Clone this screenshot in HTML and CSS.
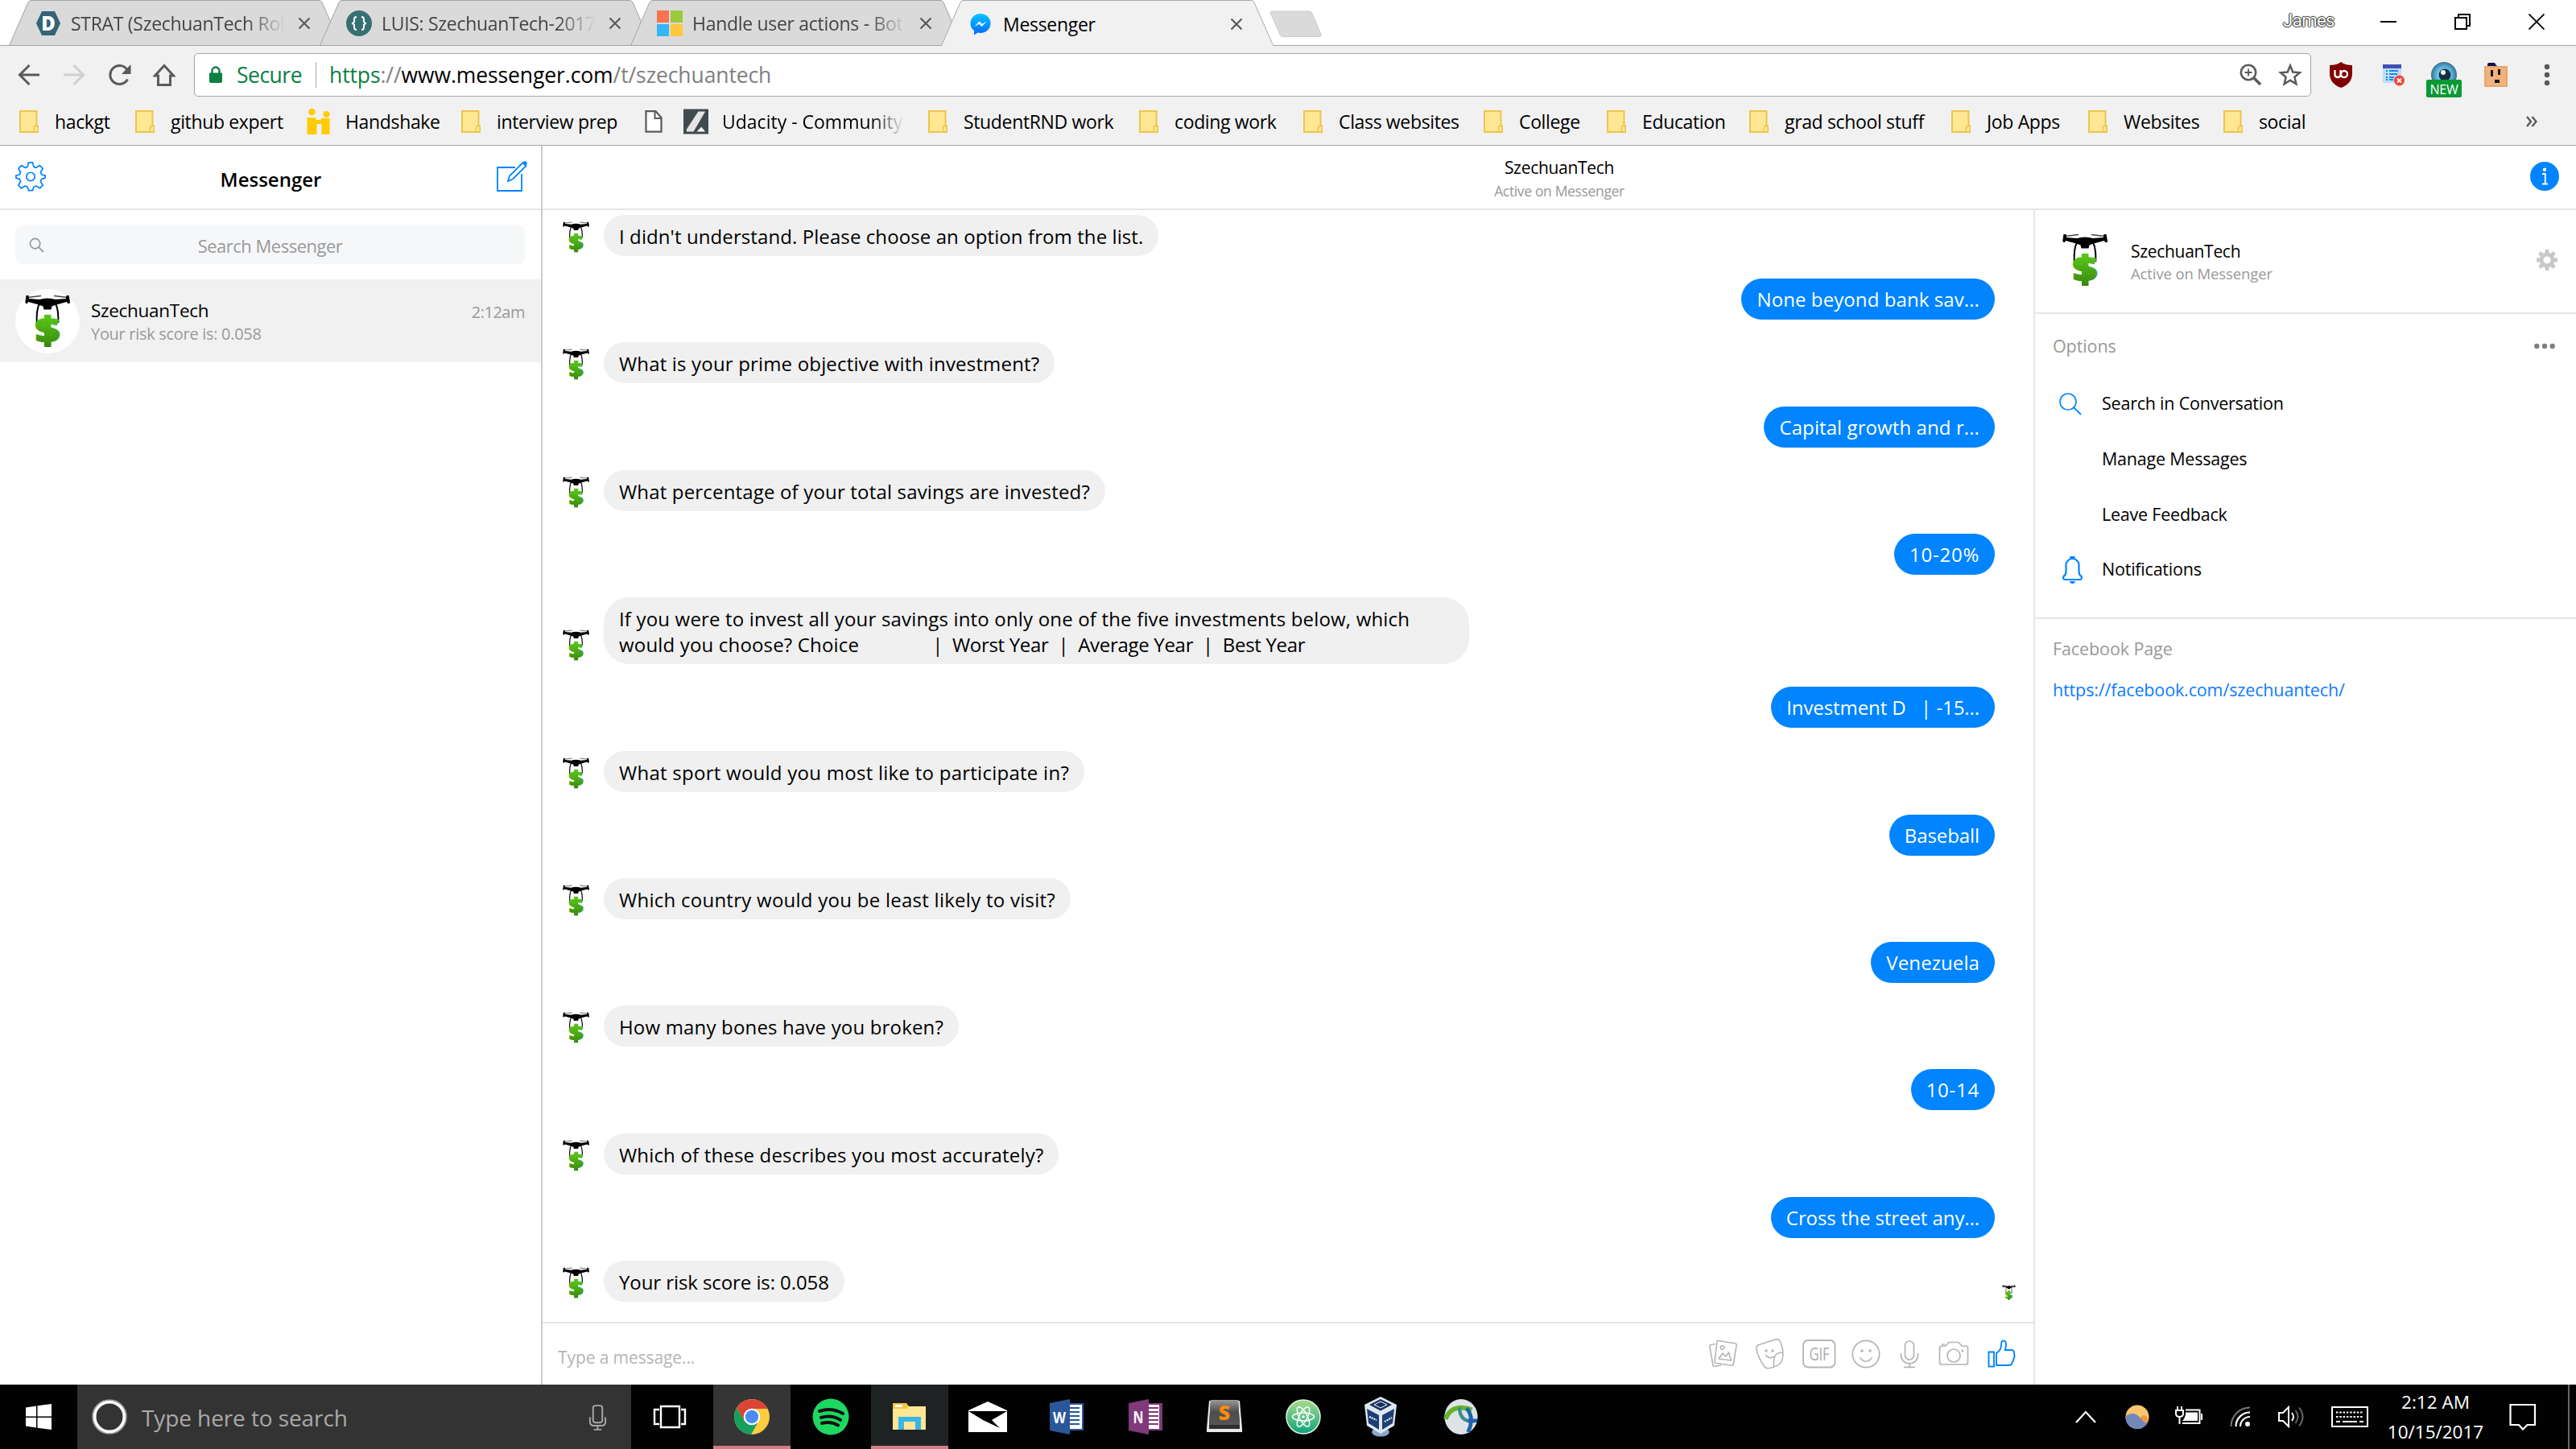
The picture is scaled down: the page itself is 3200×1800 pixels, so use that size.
FILE: index.html
```html
<!DOCTYPE html>
<html lang="en">
<head>
<meta charset="utf-8">
<title>Messenger</title>
<link rel="stylesheet" href="styles.css">
</head>
<body>
<svg class="defs" width="0" height="0" aria-hidden="true">
  <defs>
    <linearGradient id="green" x1="0" y1="0" x2="0" y2="1"><stop offset="0.25" stop-color="#58c41a"/><stop offset="1" stop-color="#347f0c"/></linearGradient>
    <linearGradient id="bolt" x1="0" y1="0" x2="0" y2="1"><stop offset="0" stop-color="#00c6ff"/><stop offset="1" stop-color="#0068ff"/></linearGradient>
    <linearGradient id="atom" x1="0" y1="0" x2="0" y2="1"><stop offset="0" stop-color="#a8dc8c"/><stop offset="1" stop-color="#0ea47c"/></linearGradient>
    <linearGradient id="key" x1="0" y1="0" x2="0" y2="1"><stop offset="0" stop-color="#9a9a9a"/><stop offset="0.5" stop-color="#4c4c4c"/><stop offset="1" stop-color="#555"/></linearGradient>
    <radialGradient id="eye"><stop offset="0" stop-color="#d8f4ff"/><stop offset="0.6" stop-color="#58b8e0"/><stop offset="1" stop-color="#3a6f8c"/></radialGradient>
  </defs>
  <symbol id="drone" viewBox="0 0 80 80">
    <circle cx="40" cy="40" r="40" fill="#fff"/>
    <path d="M15 10.500 32 8.500M65 10.500 48 8.500" stroke="#444" stroke-width="1.300"/>
    <path d="M13.500 8h3l.5 4 13 1q10-3 20 0l13-1 .5-4h3l1.500 8-.5 2h-2.500l-1-2-13 3.500-5.500 2-1 4h-9l-1-4-5.500-2-13-3.500-1 2H13l-.7-2z"/>
    <path d="M30 18q-4 8-3.300 24M50 18q4 8 3.300 24" fill="none" stroke="#000" stroke-width="2"/>
    <rect x="36" y="32" width="8.500" height="40" fill="url(#green)"/>
    <text x="40" y="66" text-anchor="middle" font-family="Open Sans" font-weight="800" font-size="42" textLength="31" lengthAdjust="spacingAndGlyphs" fill="url(#green)" stroke="url(#green)" stroke-width="1.500">$</text>
  </symbol>
  <symbol id="folder" viewBox="0 0 24 28"><path d="M1 1h20.500v18.500h2V27H1z" fill="#ffe793" stroke="#ecc54b" stroke-width="2"/><path d="M18.500 27v-6q0-1.500 1.700-1.500h1.300" fill="none" stroke="#ecc54b" stroke-width="1.500"/></symbol>
  <symbol id="tab" viewBox="0 0 413 57" preserveAspectRatio="none"><path d="M.5 56.500 24 3q1-2.500 4-2.500h357q3 0 4 2.500l23.500 53.500z" fill="#dadada" stroke="#a3a3a3"/></symbol>
  <symbol id="cross" viewBox="0 0 16 16"><path d="m1.500 1.500 13 13m0-13-13 13" stroke="#5a5a5a" stroke-width="2.200"/></symbol>
</svg>

<header class="browser">
  <div class="tabstrip">
    <div class="tab"><svg class="tab-shape"><use href="#tab"/></svg>
      <svg class="favicon" viewBox="0 0 32 32"><path d="M8 1h16l7 15-7 15H8L1 16z" fill="#356379"/><text x="16" y="25" text-anchor="middle" font-family="Open Sans" font-weight="800" font-size="24" fill="#fff">D</text></svg>
      <span class="tab-title faded">STRAT (SzechuanTech Rob</span><svg class="close"><use href="#cross"/></svg></div>
    <div class="tab"><svg class="tab-shape"><use href="#tab"/></svg>
      <svg class="favicon" viewBox="0 0 32 32"><circle cx="16" cy="16" r="16" fill="#377072"/><path d="M13 8q-3 0-3 3v3l-2 2 2 2v3q0 3 3 3M19 8q3 0 3 3v3l2 2-2 2v3q0 3-3 3" fill="none" stroke="#fff" stroke-width="2"/></svg>
      <span class="tab-title faded">LUIS: SzechuanTech-2017</span><svg class="close"><use href="#cross"/></svg></div>
    <div class="tab"><svg class="tab-shape"><use href="#tab"/></svg>
      <svg class="favicon" viewBox="0 0 32 32"><path d="M0 0h15v15H0z" fill="#f8734f"/><path d="M17 0h15v15H17z" fill="#9bcb3c"/><path d="M0 17h15v15H0z" fill="#35b5f3"/><path d="M17 17h15v15H17z" fill="#ffc83d"/></svg>
      <span class="tab-title faded">Handle user actions - Bot</span><svg class="close"><use href="#cross"/></svg></div>
    <div class="tab active"><svg class="tab-shape" viewBox="0 0 413 58" preserveAspectRatio="none"><path d="M0 58v-1.500q1 0 1.500-1.500L24 3q1-2.500 4-2.500h357q3 0 4 2.500l22 52q.500 1.500 2 1.500V58z" fill="#f1f1f1"/><path d="M.5 56.500 24 3q1-2.500 4-2.500h357q3 0 4 2.500l23.500 53.500" fill="none" stroke="#a9a9a9"/></svg>
      <svg class="favicon" viewBox="0 0 32 32"><path d="M16 3C9 3 3.500 8.300 3.500 15c0 4 1.700 7 4.500 9v5.500l4.500-3c1 .3 2.300.5 3.500.5 7 0 12.500-5.300 12.500-12S23 3 16 3z" fill="url(#bolt)"/><path d="m8.500 19 6-6.500 3.500 3.300 5.700-3.300-6 6.500-3.400-3.300z" fill="#fff"/></svg>
      <span class="tab-title">Messenger</span><svg class="close"><use href="#cross"/></svg></div>
    <svg class="newtab" viewBox="0 0 68 34"><path d="M4 1h46q3 0 4 2.500l11 26q1 3-2 3H18q-3 0-4-2.500L2.500 4Q1.500 1 4 1z" fill="#dadada" stroke="#ccc"/></svg>
    <div class="window">
      <span class="profile">James</span>
      <svg viewBox="0 0 20 20"><path d="M0 10h20" stroke="#000" stroke-width="2"/></svg>
      <svg viewBox="0 0 20 20"><path d="M1 5h14v14H1zM5 5V1h14v14h-4" fill="none" stroke="#000" stroke-width="2"/></svg>
      <svg viewBox="0 0 20 20"><path d="m.5.5 19 19m0-19-19 19" stroke="#000" stroke-width="1.800"/></svg>
    </div>
  </div>

  <div class="toolbar">
    <svg viewBox="0 0 28 28"><path d="M27 14H3M14.500 2 2.500 14l12 12" fill="none" stroke="#5a5a5a" stroke-width="3"/></svg>
    <svg viewBox="0 0 28 28"><path d="M1 14h24M13.500 2l12 12-12 12" fill="none" stroke="#d0d0d0" stroke-width="3"/></svg>
    <svg viewBox="0 0 28 28"><path d="M23.500 19.500A11.500 11.500 0 1 1 22.500 7" fill="none" stroke="#5a5a5a" stroke-width="3"/><path d="M27.500 1v12H16z" fill="#5a5a5a"/></svg>
    <svg viewBox="0 0 28 28"><path d="M6.500 15v11.500h15V15h4L14 2.500 2.500 15z" fill="none" stroke="#5a5a5a" stroke-width="3"/></svg>
    <div class="omnibox">
      <svg class="lock" viewBox="0 0 16 22"><path d="M0 8.500h16V19q0 2-2 2H2q-2 0-2-2z" fill="#0b8043"/><path d="M3.500 9V6a4.500 4.500 0 0 1 9 0v3" fill="none" stroke="#0b8043" stroke-width="2.400"/></svg>
      <span class="secure">Secure</span>
      <span class="url"><b>https</b>://<i>www.messenger.com</i>/t/szechuantech</span>
      <svg class="zoomicon" viewBox="0 0 28 28"><circle cx="11" cy="11" r="9.200" fill="none" stroke="#5a5a5a" stroke-width="2.600"/><path d="M11 6.500v9M6.500 11h9" stroke="#5a5a5a" stroke-width="1.800"/><path d="m17.500 17.500 8.500 8.500" stroke="#5a5a5a" stroke-width="3.600"/></svg>
      <svg class="star" viewBox="0 0 30 30"><path d="m15 3.500 3.300 8 8.700.7-6.600 5.600 2 8.500-7.400-4.600-7.400 4.600 2-8.500L3 12.200l8.700-.7z" fill="none" stroke="#5a5a5a" stroke-width="2.500"/></svg>
    </div>
    <svg class="ext" viewBox="0 0 32 32"><path d="M16 0q5 4 14 4v10q0 13-14 18Q2 27 2 14V4q9 0 14-4z" fill="#800000"/><path d="M8.500 10v5.500q0 3.500 3.500 3.500t3.500-3.500V10" fill="none" stroke="#fff" stroke-width="2.300"/><circle cx="20" cy="15" r="4" fill="none" stroke="#fff" stroke-width="2.300"/></svg>
    <svg class="ext" viewBox="0 0 32 32"><path d="M4 3h23v23H4z" fill="#bbdefb"/><path d="M4 3h23v5H4z" fill="#3f51b5"/><path d="M8 11h2m2 0h11M8 15h2m2 0h10M8 19h2m2 0h6M8 22h2m2 0h5" stroke="#1e88e5" stroke-width="2"/><circle cx="24.500" cy="23" r="6.500" fill="#f44336"/><path d="m22 20.500 5 5m0-5-5 5" stroke="#fff" stroke-width="2"/></svg>
    <div class="ext-badged"><svg class="ext" viewBox="0 0 32 32"><circle cx="16" cy="16" r="16" fill="url(#eye)"/><circle cx="17" cy="16" r="7.500" fill="#17303f"/><circle cx="15" cy="13" r="3" fill="#fff"/></svg><span class="badge">NEW</span></div>
    <svg class="ext" viewBox="0 0 32 32"><path d="M6 5V3q0-2 2-2h6q2 0 2 2l2 2z" fill="#10104f"/><path d="M2 5h29v26H2z" fill="#f0b27a"/><path d="M3 6h27v24H3z" fill="none" stroke="#dd9c60"/><path d="M10 10h3v8h-3zM19 9h3v7h-3zM15 22h6v4h-6z" fill="#111"/></svg>
    <svg class="ext" viewBox="0 0 32 32"><circle cx="16" cy="6" r="3.200" fill="#5a5a5a"/><circle cx="16" cy="16" r="3.200" fill="#5a5a5a"/><circle cx="16" cy="26" r="3.200" fill="#5a5a5a"/></svg>
  </div>

  <nav class="bookmarks">
    <span><svg class="folder"><use href="#folder"/></svg>hackgt</span>
    <span><svg class="folder"><use href="#folder"/></svg>github expert</span>
    <span><svg class="site" viewBox="0 0 30 32"><path d="M0 11h11v3h6v-2h11v20H18V19h-6v13H0z" fill="#ffcb05"/><circle cx="6" cy="4" r="4.300" fill="#ffcb05"/><circle cx="24" cy="7" r="4" fill="#ffcb05"/></svg>Handshake</span>
    <span><svg class="folder"><use href="#folder"/></svg>interview prep</span>
    <span><svg class="folder" viewBox="0 0 22 28"><path d="M1.500 1.200h12l7 8v17.500h-19z" fill="#fff" stroke="#5a5a5a" stroke-width="2.200"/><path d="M12.500 1.500v8.500h8" fill="none" stroke="#5a5a5a" stroke-width="2"/></svg></span>
    <span><svg class="site" viewBox="0 0 32 32"><path d="M0 0h32v32H0z" fill="#414b4f"/><path d="M19 3h9L13 29H4v-3z" fill="#e4e4e4"/><path d="m17 29 6-6 5 6z" fill="#fff"/></svg><em>Udacity - Community</em></span>
    <span><svg class="folder"><use href="#folder"/></svg>StudentRND work</span>
    <span><svg class="folder"><use href="#folder"/></svg>coding work</span>
    <span><svg class="folder"><use href="#folder"/></svg>Class websites</span>
    <span><svg class="folder"><use href="#folder"/></svg>College</span>
    <span><svg class="folder"><use href="#folder"/></svg>Education</span>
    <span><svg class="folder"><use href="#folder"/></svg>grad school stuff</span>
    <span><svg class="folder"><use href="#folder"/></svg>Job Apps</span>
    <span><svg class="folder"><use href="#folder"/></svg>Websites</span>
    <span><svg class="folder"><use href="#folder"/></svg>social</span>
    <svg class="more" viewBox="0 0 14 14"><path d="m1 1 5 6-5 6M7.500 1l5 6-5 6" fill="none" stroke="#5a5a5a" stroke-width="2.400"/></svg>
  </nav>
</header>

<main class="app">
  <aside class="sidebar">
    <div class="side-head">
      <svg class="gear" viewBox="0 0 40 40"><path d="M17.300 2h5.400l1.300 5.500 3.200 1.300 4.900-2.900 3.900 3.900-2.900 4.900 1.300 3.200 4.600 1v3.400l-4.600 1.300-1.300 3.200 2.900 5-3.900 3.800-4.900-2.900L24 34l-1.300 4.500h-5.400L16 34l-3.200-1.300-4.900 2.900L4 31.800l2.900-5-1.300-3.200L1 22.300v-3.400l4.600-1 1.300-3.200L4 9.800l3.900-3.900 4.900 2.900L16 7.500z" fill="none" stroke="#0084ff" stroke-width="1.800" stroke-linejoin="round"/><circle cx="20" cy="20.500" r="5.500" fill="none" stroke="#0084ff" stroke-width="1.800"/></svg>
      <h1>Messenger</h1>
      <svg class="compose" viewBox="0 0 40 40"><path d="M24 9H2v29h30V17" fill="none" stroke="#0084ff" stroke-width="1.800"/><path d="m15 26 2-6.500L33.500 3l4 4L21 23.500z" fill="none" stroke="#0084ff" stroke-width="1.800"/><path d="m33 3.500 2-2q1.500-1 3 .5t.5 3l-2 2z" fill="#0084ff"/></svg>
    </div>
    <div class="search"><svg viewBox="0 0 20 20"><circle cx="8" cy="8" r="6.500" fill="none" stroke="#999" stroke-width="1.800"/><path d="m12.500 12.500 6.500 6.500" stroke="#999" stroke-width="2"/></svg><span>Search Messenger</span></div>
    <div class="thread">
      <svg class="face"><use href="#drone"/></svg>
      <div class="thread-text"><p class="thread-name">SzechuanTech</p><p class="thread-last">Your risk score is: 0.058</p></div>
      <time>2:12am</time>
    </div>
  </aside>

  <section class="conversation">
    <div class="conv-head">
      <div class="conv-title"><p>SzechuanTech</p><small>Active on Messenger</small></div>
      <svg class="info" viewBox="0 0 36 36"><circle cx="18" cy="18" r="18" fill="#0084ff"/><circle cx="18" cy="9.800" r="2.200" fill="#fff"/><path d="M15 15h3.800V27M15 27.500h7" fill="none" stroke="#fff" stroke-width="1.800"/></svg>
    </div>
    <div class="conv-body">
      <div class="chat">
        <div class="log">
          <div class="msg in"><svg><use href="#drone"/></svg><p class="even">I didn't understand. Please choose an option from the list.</p></div>
          <div class="msg out"><p class="even">None beyond bank sav...</p></div>
          <div class="msg in"><svg><use href="#drone"/></svg><p>What is your prime objective with investment?</p></div>
          <div class="msg out"><p class="even">Capital growth and r...</p></div>
          <div class="msg in"><svg><use href="#drone"/></svg><p>What percentage of your total savings are invested?</p></div>
          <div class="msg out"><p class="digits">10-20%</p></div>
          <div class="msg in"><svg><use href="#drone"/></svg><p class="long">If you were to invest all your savings into only one of the five investments below, which<br>would you choose? Choice<span class="columns">|&nbsp; Worst Year&nbsp; |&nbsp; Average Year&nbsp; |&nbsp; Best Year</span></p></div>
          <div class="msg out"><p class="tight">Investment D &nbsp; | -15...</p></div>
          <div class="msg in"><svg><use href="#drone"/></svg><p class="loose">What sport would you most like to participate in?</p></div>
          <div class="msg out"><p class="tight">Baseball</p></div>
          <div class="msg in"><svg><use href="#drone"/></svg><p class="loose">Which country would you be least likely to visit?</p></div>
          <div class="msg out"><p class="even">Venezuela</p></div>
          <div class="msg in"><svg><use href="#drone"/></svg><p>How many bones have you broken?</p></div>
          <div class="msg out"><p class="digits">10-14</p></div>
          <div class="msg in"><svg><use href="#drone"/></svg><p>Which of these describes you most accurately?</p></div>
          <div class="msg out"><p class="tight">Cross the street any...</p></div>
          <div class="msg in"><svg><use href="#drone"/></svg><p class="tight">Your risk score is: 0.058</p><svg class="seen"><use href="#drone"/></svg></div>
        </div>
        <div class="composer">
          <span>Type a message...</span>
          <svg class="photos" viewBox="0 0 44 40"><g fill="none" stroke="#b5b5b5" stroke-width="1.600" stroke-linejoin="round"><path d="m18 3.500 21 3.500q1.500.3 1.200 2l-4 24q-.2 1.500-2 1.200l-20-3q-1.500-.3-1.200-2L16 5q.3-1.800 2-1.500zM14 7.500l-6 1q-1.500.3-1.200 2L11 34q.3 1.500 2 1.200l8-1.200"/><circle cx="22.500" cy="12" r="2.300"/><path d="m18 26 5-7 4 4 3.500-5 3 10z"/></g></svg>
          <svg class="sticker" viewBox="0 0 44 40"><g fill="none" stroke="#b5b5b5" stroke-width="1.600"><path d="M5 14q-1-4 3-5.500L28 2q5-1.500 7 3.500 4 9 2.500 19Q36 35 21 37.500q-5 1-7-3Q7 24 5 14zM38 18q-6 0-9 3t-2.500 15M16 21q5 6 11 2"/></g><circle cx="17" cy="16" r="1.700" fill="#b5b5b5"/><circle cx="25" cy="16" r="1.700" fill="#b5b5b5"/></svg>
          <svg class="gif" viewBox="0 0 44 40"><rect x="2" y="3" width="39.500" height="33.500" rx="6" fill="none" stroke="#b5b5b5" stroke-width="1.800"/><text x="22" y="27.500" text-anchor="middle" font-family="Open Sans" font-weight="400" font-size="22" textLength="25" lengthAdjust="spacingAndGlyphs" fill="#aaa">GIF</text></svg>
          <svg class="smile" viewBox="0 0 44 40"><g fill="none" stroke="#b5b5b5" stroke-width="1.700"><circle cx="22" cy="20" r="16.700"/><path d="M15 25q7 8.500 14 0" stroke-linecap="round"/></g><circle cx="17" cy="16" r="1.800" fill="#b5b5b5"/><circle cx="27" cy="16" r="1.800" fill="#b5b5b5"/></svg>
          <svg class="voice" viewBox="0 0 44 40"><g fill="none" stroke="#b5b5b5" stroke-width="1.700"><rect x="16.500" y="4" width="11" height="23" rx="5.500"/><path d="M11.500 19v2.500a10.500 10.500 0 0 0 21 0V19M22 32v4M15 36.300h14"/></g></svg>
          <svg class="camera" viewBox="0 0 44 40"><g fill="none" stroke="#b5b5b5" stroke-width="1.700"><path d="M6 10h6l4-4.500h12l4 4.500h5q2.500 0 2.500 2.500v18q0 2.500-2.500 2.500H7q-2.500 0-2.500-2.500v-18Q4.500 10 7 10M7 8h4"/><circle cx="22" cy="22" r="8"/></g><circle cx="33" cy="16" r="1.500" fill="#b5b5b5"/></svg>
          <svg class="like" viewBox="0 0 44 40"><path d="M6.500 17.500H13v18H6.500zM16 19q6-4 6-10 0-5.500 2.500-5.500 4 0 3.500 6l-1.300 5.500H35q4 .5 3 5 1 1.500.3 4-.3 1-1 1.700.3 3-1.700 4.300 0 4-4.600 4H16z" fill="none" stroke="#0084ff" stroke-width="1.900"/></svg>
        </div>
      </div>
      <aside class="details">
        <div class="who"><svg class="face"><use href="#drone"/></svg><div><p>SzechuanTech</p><small>Active on Messenger</small></div>
          <svg class="cog" viewBox="0 0 26 26"><circle cx="13" cy="13" r="7" fill="none" stroke="#c8c8c8" stroke-width="5"/><path d="M13 0v5m0 16v5M0 13h5m16 0h5M3.800 3.800 7 7m12 12 3.200 3.200m0-18.400L19 7M7 19l-3.200 3.200" stroke="#c8c8c8" stroke-width="4.800"/></svg></div>
        <div class="options">
          <h2>Options<svg viewBox="0 0 26 8"><circle cx="3.300" cy="4" r="3.200" fill="#7f7f7f"/><circle cx="13" cy="4" r="3.200" fill="#7f7f7f"/><circle cx="22.700" cy="4" r="3.200" fill="#7f7f7f"/></svg></h2>
          <p><svg viewBox="0 0 34 34"><circle cx="14" cy="14" r="10" fill="none" stroke="#0084ff" stroke-width="1.600"/><path d="m21 21 9 9" stroke="#0084ff" stroke-width="1.800"/></svg>Search in Conversation</p>
          <p>Manage Messages</p>
          <p>Leave Feedback</p>
          <p><svg viewBox="0 0 34 34"><path d="M19.500 3a8 8 0 0 1 8 9v7q0 4 3 6 1.500 3.500-2 4h-18q-3.500-.5-2-4 3-2 3-6v-7a8 8 0 0 1 8-9zM17.500 3V1h4v2" fill="none" stroke="#0084ff" stroke-width="2.200"/><path d="M16 31h7q-.5 3-3.500 3T16 31z" fill="#0084ff"/></svg>Notifications</p>
        </div>
        <div class="page"><h2>Facebook Page</h2><a>https://facebook.com/szechuantech/</a></div>
      </aside>
    </div>
  </section>
</main>

<footer class="taskbar">
  <div class="cell start"><svg viewBox="0 0 32 32"><path d="m0 4.500 13-2v13H0zM14.500 2.200 32 0v15.500H14.500zM0 17h13v12.500l-13-2zM14.500 17H32v15l-17.500-2.300z" fill="#fff"/></svg></div>
  <div class="find">
    <svg class="cortana" viewBox="0 0 44 44"><circle cx="22" cy="22" r="18.500" fill="none" stroke="#fff" stroke-width="4"/><circle cx="22" cy="22" r="21" fill="none" stroke="#999" stroke-width="1.600"/></svg>
    <span>Type here to search</span>
    <svg class="mic" viewBox="0 0 24 34"><g fill="none" stroke="#a9a9a9" stroke-width="2"><rect x="6" y="2" width="12" height="22" rx="3"/><path d="M2 17v6q0 5 5 5h10q5 0 5-5v-6M12 28v5M7 33h10"/></g></svg>
  </div>
  <div class="cell view"><svg viewBox="0 0 42 30"><path d="M10 2h23v26H10zM8 6H2v18h6M35 6h5v18h-5" fill="none" stroke="#fff" stroke-width="2.400"/></svg></div>
  <div class="cell open lit"><svg viewBox="0 0 44 44"><circle cx="22" cy="22" r="22" fill="#ffcd40"/><path d="M3 11A22 22 0 0 1 41.500 12H22L12 26z" fill="#db4437"/><path d="M3 11a22 22 0 0 0 18 33l9-16-12 3-6-5z" fill="#16a05d"/><circle cx="22" cy="22" r="10.300" fill="#fff"/><circle cx="22" cy="22" r="8.200" fill="#4c8bf5"/></svg></div>
  <div class="cell wide"><svg viewBox="0 0 46 46"><circle cx="23" cy="23" r="22.500" fill="#1ed760"/><path d="M9 16q15-5 29 3M11 24q13-4 24 3M12 31q11-3 20 2.500" fill="none" stroke="#111" stroke-width="4" stroke-linecap="round"/></svg></div>
  <div class="cell open"><svg viewBox="0 0 44 44"><path d="M1 6h16l4 3h21v29H1z" fill="#ffe694"/><path d="M1 5h17l3 4-3 3H1z" fill="#f5c445"/><path d="M4 7h9v3H4z" fill="#fff"/><path d="M8 38V22h28v16h-7V28H15v10z" fill="#3ab5e9"/></svg></div>
  <div class="cell mail"><svg viewBox="0 0 48 44"><path d="M0 14 24 3l24 11v27H0z" fill="#fff"/><path d="M0 15h48L29 26l10 10-21-10z" fill="#000"/></svg></div>
  <div class="cell"><svg viewBox="0 0 44 44"><path d="M24 6h18v32H24z" fill="#fff" stroke="#2b579a" stroke-width="2"/><path d="M25 11h13M25 16h13M25 21h13M25 26h13M25 31h13" stroke="#2b579a" stroke-width="2"/><path d="M1 5 26 0v44L1 39z" fill="#2b579a"/><text x="13" y="30" text-anchor="middle" font-family="Open Sans" font-weight="700" font-size="19" textLength="16" lengthAdjust="spacingAndGlyphs" fill="#fff">W</text></svg></div>
  <div class="cell"><svg viewBox="0 0 44 44"><path d="M24 6h18v32H24z" fill="#fff" stroke="#80397b" stroke-width="2"/><path d="M25 11h13M25 16h13M25 21h13M25 26h13M25 31h13M40 6v32" stroke="#80397b" stroke-width="2"/><path d="M1 5 26 0v44L1 39z" fill="#80397b"/><text x="13" y="30" text-anchor="middle" font-family="Open Sans" font-weight="700" font-size="21" textLength="13" lengthAdjust="spacingAndGlyphs" fill="#fff">N</text></svg></div>
  <div class="cell"><svg viewBox="0 0 44 44"><path d="M3 2h38l3 35v4H0v-4z" fill="#e8e8e8"/><path d="M5 1h34l2 30v6H3v-6z" fill="#2e2e2e"/><path d="M5 1h34l2 31H3z" fill="url(#key)"/><text x="22" y="26" text-anchor="middle" font-family="Open Sans" font-weight="800" font-size="25" fill="#ff8c0a">S</text></svg></div>
  <div class="cell"><svg viewBox="0 0 44 44"><circle cx="22" cy="22" r="21" fill="url(#atom)" stroke="#e3f3e3" stroke-width="1.500"/><g fill="none" stroke="#fff" stroke-width="1.500"><ellipse cx="22" cy="22" rx="13.500" ry="5"/><ellipse cx="22" cy="22" rx="13.500" ry="5" transform="rotate(62 22 22)"/><ellipse cx="22" cy="22" rx="13.500" ry="5" transform="rotate(118 22 22)"/></g><circle cx="22" cy="22" r="1.800" fill="#fff"/></svg></div>
  <div class="cell vbox"><svg viewBox="0 0 44 50"><ellipse cx="22" cy="44" rx="11" ry="5.500" fill="#8ea4cc"/><path d="m22 0 20 10-3 26-17 10-17-10L2 10z" fill="#dfe7f5"/><path d="m22 3 14 7-14 7.500L8 10z" fill="#17305c"/><path d="m22 6 8 4-8 4-8-4z" fill="none" stroke="#fff"/><path d="m5 15 15 8v18L7 33zM39 15l-15 8v18l13-8z" fill="#1d3f73"/><path d="m8 25 9 4M27 31l9-5" stroke="#fff" stroke-width="2" stroke-dasharray="2 1"/></svg></div>
  <div class="cell"><svg viewBox="0 0 44 46"><ellipse cx="22" cy="23" rx="21.500" ry="23" fill="#dfe3e6"/><path d="M2 26q4-13 18-15 9 0 16 3" fill="none" stroke="#65b32e" stroke-width="6"/><path d="M20 11q0 16 14 18" fill="none" stroke="#3b8f8f" stroke-width="4.500"/><path d="M29 12q11 12 2 31M31 28h12" fill="none" stroke="#1d63b0" stroke-width="5"/></svg></div>
  <div class="tray">
    <svg width="26" height="16" viewBox="0 0 26 16"><path d="M1 15 13 2l12 13" fill="none" stroke="#fff" stroke-width="2.200"/></svg>
    <svg width="30" height="30" viewBox="0 0 30 30"><circle cx="15" cy="15" r="14.500" fill="#fbc570"/><path d="M19 17q3-8 9 0l-1 6z" fill="#f0953a"/><path d="M.5 14q10-7 18 2 5 6 9 7A14.500 14.500 0 0 1 .5 14z" fill="#7488b8"/></svg>
    <svg width="34" height="26" viewBox="0 0 34 26"><path d="M3 0v5m5-5v5M1 5h9v4q0 4-4.500 4T1 9zM5.500 13v9" fill="none" stroke="#fff" stroke-width="2"/><path d="M13 4.500h17.500v16.500H9M33 9v8" fill="none" stroke="#fff" stroke-width="2"/><path d="M13 7.500h15v10.500H9q4-4 4-10.500z" fill="#fff"/></svg>
    <svg width="26" height="26" viewBox="0 0 26 26"><path d="M1.500 25A23.500 23.500 0 0 1 25 1.500" fill="none" stroke="#777" stroke-width="2"/><path d="M7.500 25A17.500 17.500 0 0 1 25 7.500M13 25a12 12 0 0 1 12-12" fill="none" stroke="#fff" stroke-width="2.200"/><circle cx="22" cy="22" r="3" fill="#fff"/></svg>
    <svg width="34" height="28" viewBox="0 0 34 28"><path d="M1 9h5l7-7v24l-7-7H1zM17 9q4 5 0 10" fill="none" stroke="#fff" stroke-width="2"/><path d="M21.500 6q6 8 0 16M26 2.500q9 11.500 0 23" fill="none" stroke="#666" stroke-width="2"/></svg>
    <svg width="46" height="26" viewBox="0 0 46 26"><path d="M1 1h44v24H1z" fill="none" stroke="#fff" stroke-width="2"/><path d="M6 7.500h34M6 13h34" stroke="#fff" stroke-width="2.200" stroke-dasharray="2.500 1.800"/><path d="M6 19h5m3 0h18m3 0h5" stroke="#fff" stroke-width="2.200"/></svg>
    <div class="clock"><span>2:12 AM</span><span>10/15/2017</span></div>
    <svg width="34" height="34" viewBox="0 0 34 34"><path d="M1.500 2h30.500v25h-9.500L17 32.500 12 27H1.500z" fill="none" stroke="#fff" stroke-width="2.200"/></svg>
    <i class="peek"></i>
  </div>
</footer>
</body>
</html>
```
FILE: styles.css
```css
* { box-sizing: border-box; margin: 0; padding: 0; }
body {
  width: 3200px; height: 1800px; overflow: hidden;
  display: flex; flex-direction: column;
  background: #fff; color: #000;
  font: 400 23px/32px "Open Sans", "Noto Sans", sans-serif;
}
svg { display: block; flex: none; }
.defs { position: absolute; }
p, span, h1, h2, a, small, time { white-space: nowrap; }

/* Browser frame */
.tabstrip { height: 58px; display: flex; padding-left: 11px; background: linear-gradient(#fff 56px, #a3a3a3 56px 57px, #f1f1f1 57px); }
.tab { position: relative; width: 413px; height: 57px; display: flex; align-items: center; padding: 1px 38px 0 33px; }
.tab + .tab { margin-left: -27px; }
.tab.active { height: 58px; z-index: 1; }
.tab-shape { position: absolute; left: 0; top: 0; width: 100%; height: 100%; }
.favicon { position: relative; width: 32px; height: 32px; margin-right: 12px; }
.tab-title { position: relative; flex: 1; overflow: hidden; color: #000; font-size: 23px; letter-spacing: -.3px; }
.tab-title.faded { color: #444; max-width: 266px; -webkit-mask-image: linear-gradient(90deg, #000 82%, transparent 100%); mask-image: linear-gradient(90deg, #000 82%, transparent 100%); }
.close { position: relative; width: 16px; height: 16px; margin-left: auto; }
.newtab { width: 68px; height: 34px; margin: 13px 0 0 -6px; }
.window { margin-left: auto; display: grid; grid-template-columns: 106px 92px 92px 92px 3px; align-items: center; justify-items: center; height: 54px; }
.window svg { width: 20px; height: 20px; }
.profile { color: #fff; font-family: Roboto, sans-serif; font-size: 22px; letter-spacing: -.5px; margin-bottom: 2px; text-shadow: 1px 0 1px #333, -1px 0 1px #333, 0 1px 1px #333, 0 -1px 1px #333; }

.toolbar { height: 64px; background: #f1f1f1; display: grid; grid-template-columns: 56px 56px 57px 54px 2645px repeat(5, 64px); padding: 8px 0 0 8px; justify-items: center; align-items: center; align-content: start; }
.toolbar > svg { width: 28px; height: 28px; }
.toolbar .ext { width: 32px; height: 32px; }
.omnibox { width: 2630px; height: 54px; margin-left: 5px; background: #fff; border: 1.500px solid #a6a6a6; border-radius: 5px; display: flex; align-items: center; padding: 0 10px 0 18px; }
.lock { width: 16px; height: 22px; margin-right: 18px; }
.secure { color: #0b8043; width: 99px; height: 32px; border-right: 1px solid #aaa; font-size: 26.500px; letter-spacing: -.5px; }
.url { color: #808080; margin-left: 16px; font-size: 26.500px; letter-spacing: -.1px; }
.url b { color: #0b8043; font-weight: 400; }
.url i { color: #000; font-style: normal; }
.zoomicon { width: 28px; height: 28px; margin-left: auto; margin-right: 20px; }
.star { width: 30px; height: 30px; }
.ext-badged { position: relative; }
.badge { position: absolute; left: -6px; top: 22px; width: 44px; height: 22px; border-radius: 2px; background: #0a9934; color: #fff; font-size: 16px; line-height: 24px; text-align: center; letter-spacing: -.3px; }

.bookmarks { height: 59px; background: #f1f1f1; border-bottom: 1px solid #aaa; display: grid; align-items: center; padding-left: 24px;
  grid-template-columns: 144px 213px 192px 227px 49px 304px 262px 204px 224px 153px 177px 251px 170px 168px 376px 14px; }
.bookmarks span { display: flex; align-items: center; height: 32px; letter-spacing: -.35px; }
.folder { width: 24px; height: 28px; margin-right: 20px; }
.site { width: 31px; height: 32px; margin-right: 17px; }
.bookmarks em { font-style: normal; width: 226px; overflow: hidden; letter-spacing: 0; -webkit-mask-image: linear-gradient(90deg, #000 82%, transparent); mask-image: linear-gradient(90deg, #000 82%, transparent); }
.more { width: 14px; height: 14px; }

/* Messenger */
.app { height: 1539px; display: flex; }
.sidebar { width: 674px; border-right: 2px solid #ccc; }
.side-head { height: 80px; border-bottom: 2px solid #e5e5e5; display: flex; align-items: center; justify-content: space-between; padding: 0 16px 3px 19px; }
.gear { width: 38px; height: 38px; }
.compose { width: 40px; height: 40px; }
h1 { font-size: 24px; font-weight: 600; padding-top: 8px; }
.search { height: 48px; margin: 19px 20px 19px 19px; border-radius: 8px; background: #f6f7f9; color: #999; display: flex; align-items: center; padding-left: 17px; font-size: 22px; letter-spacing: -.5px; }
.search svg { width: 19px; height: 19px; }
.search span { flex: 1; text-align: center; margin-right: 36px; padding-top: 2px; }
.thread { height: 103px; background: #f1f1f1; display: flex; align-items: center; padding: 0 20px 0 19px; }
.face { width: 80px; height: 80px; }
.thread-text { flex: 1; margin-left: 14px; }
.thread-name { line-height: 30px; font-size: 22.500px; letter-spacing: -.3px; margin-top: 2px; }
.thread-last { line-height: 28px; font-size: 20px; letter-spacing: -.3px; color: #999; }
time { font-size: 20px; letter-spacing: -.5px; color: #999; margin-top: -22px; }
.conversation { flex: 1; }
.conv-head { height: 80px; border-bottom: 2px solid #e5e5e5; display: flex; align-items: center; justify-content: flex-end; padding: 0 21px 3px; }
.conv-title { flex: 1; text-align: center; padding: 8px 0 0 36px; line-height: 28px; }
.conv-title p, .who p { font-size: 21px; letter-spacing: -.3px; }
small { display: block; font-size: 19px; line-height: 27px; color: #999; }
.conv-title small { font-size: 17.500px; letter-spacing: -.35px; padding-top: 2px; }
.who small { font-size: 18.500px; letter-spacing: -.1px; }
.info { width: 36px; height: 36px; }
.conv-body { display: flex; height: 1459px; }
.chat { width: 1852px; display: flex; flex-direction: column; }
.log { flex: 1; display: flex; flex-direction: column; gap: 28.200px; padding: 6px 48px 0 18px; }
.msg { display: flex; align-items: flex-end; flex: none; }
.msg svg { width: 47px; height: 47px; margin-right: 11px; }
.msg p { border-radius: 26px; background: #f0f0f0; padding: 11px 19px 8px; line-height: 32px; font-size: 24px; letter-spacing: .17px; height: 51px; }
.msg .even { letter-spacing: .09px; }
.msg .loose { letter-spacing: .26px; }
.msg .tight { letter-spacing: -.08px; }
.msg .digits { letter-spacing: .75px; }
.msg .long { height: 83px; width: 1075px; border-radius: 32px; }
.columns { letter-spacing: -.3px; margin-left: 91px; }
.msg.out { justify-content: flex-end; }
.msg.out p { background: #0084ff; color: #fff; padding: 10px 19px 9px; }
.msg .seen { width: 23px; height: 23px; margin: 0 -29px 0 auto; }
.composer { height: 78px; border-top: 2px solid #e5e5e5; display: flex; align-items: center; padding: 0 18px 0 19px; color: #b5b5b5; font-size: 21px; letter-spacing: -.1px; }
.composer span { flex: 1; padding-top: 8px; }
.composer svg { width: 44px; height: 40px; }
.photos { margin-right: 16px; }
.sticker { margin-right: 17px; }
.gif { margin-right: 14px; }
.smile { margin-right: 10px; }
.voice { margin-right: 11px; }
.camera { margin-right: 15px; }
.details { flex: 1; border-left: 2px solid #e5e5e5; }
.who { height: 129px; border-bottom: 2px solid #e5e5e5; display: flex; align-items: center; padding: 0 23px 3px 22px; }
.who div { flex: 1; margin-left: 17px; padding-top: 5px; line-height: 27px; }
.cog { width: 26px; height: 26px; }
h2 { font-size: 21.500px; letter-spacing: -.1px; font-weight: 400; color: #999; display: flex; align-items: center; justify-content: space-between; }
.options { height: 379px; border-bottom: 2px solid #e5e5e5; padding: 24px 26px 0 22px; }
.options h2 { height: 32px; margin-bottom: 21px; }
.options h2 svg { width: 26px; height: 8px; }
.options p { height: 68.700px; display: flex; align-items: center; padding-left: 61px; font-size: 21.500px; letter-spacing: -.22px; }
.options p svg { width: 34px; height: 34px; margin: 2px 22px 0 -56px; }
.page { padding: 21px 22px; }
.page a { display: block; margin-top: 19px; color: #0f7bff; font-size: 21.500px; letter-spacing: -.13px; }

/* Taskbar */
.taskbar { height: 80px; background: #020203; display: flex; }
.cell { width: 98px; display: flex; align-items: center; justify-content: center; }
.cell svg { width: 44px; height: 44px; }
.start { width: 96px; }
.start svg { width: 32px; height: 32px; }
.find { width: 688px; background: #333; display: flex; align-items: center; padding: 0 30px 0 18px; color: #a9a9a9; }
.find span { flex: 1; margin-left: 18px; font-size: 28px; letter-spacing: -.1px; padding-top: 2px; }
.cortana { width: 44px; height: 44px; }
.mic { width: 23px; height: 33px; }
.view { width: 102px; }
.view svg { width: 42px; height: 30px; margin-right: 6px; }
.open { width: 96px; background: #1f2222; border-bottom: 4px solid #d17c86; padding-top: 4px; }
.lit { background: #353535; }
.wide { width: 100px; }
.wide svg { width: 46px; height: 46px; }
.mail svg { width: 48px; }
.vbox svg { height: 50px; margin-right: 4px; }
.tray { margin-left: auto; display: grid; grid-template-columns: 64px 64px 64px 64px 64px 80px 135px 80px 26px; align-items: center; justify-items: center; }
.clock { color: #fff; display: flex; flex-direction: column; align-items: center; font-size: 22.500px; line-height: 37px; padding-right: 2px; }
.peek { width: 2px; height: 80px; background: #666; margin-left: 8px; }
```
